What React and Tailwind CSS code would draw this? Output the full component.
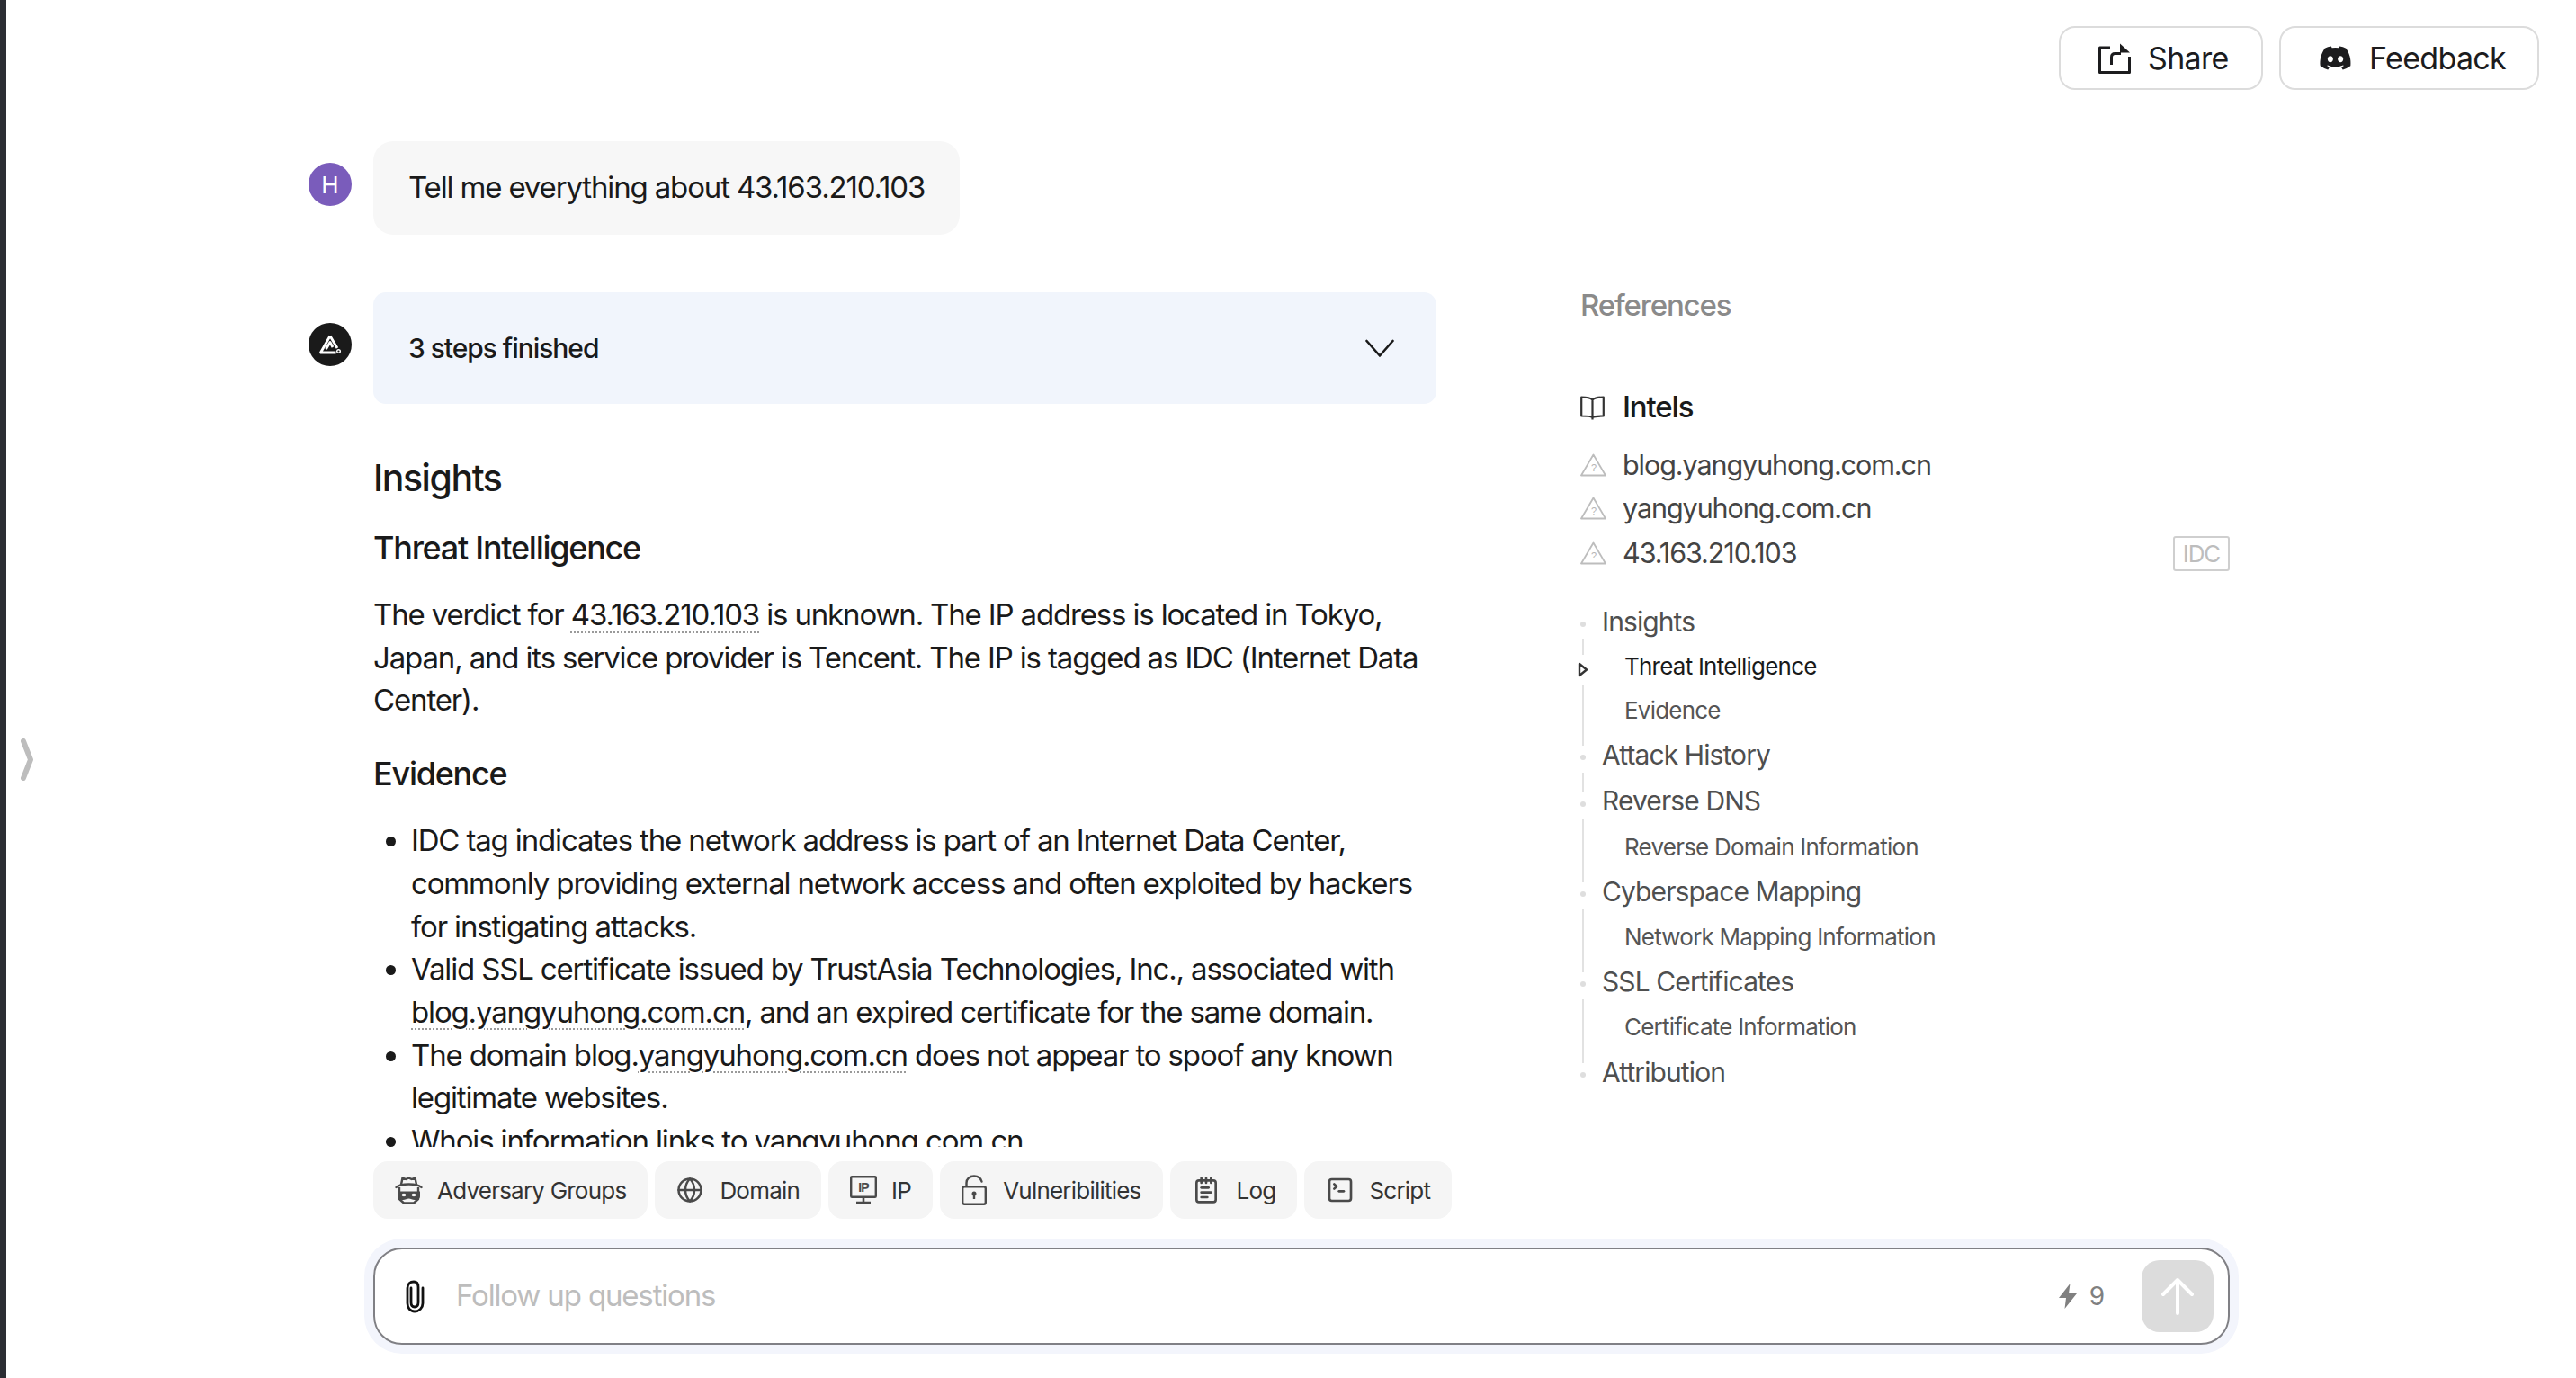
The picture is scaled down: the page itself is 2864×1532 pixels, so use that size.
import React from "react";
import { FaDiscord } from "react-icons/fa";
import { Globe, NotepadText, SquareTerminal } from "lucide-react";

const ShareIcon = () => (
  <svg width="36" height="34" viewBox="0 0 36 34" fill="none" className="shrink-0">
    <path d="M13 5H1.5V32.5H34.5V15" stroke="#1c1c1e" strokeWidth="3" strokeLinejoin="round" />
    <path d="M14.5 24V15.5C14.5 13 16 11.5 18.5 11.5H25" stroke="#1c1c1e" strokeWidth="3" />
    <path d="M24 0.5L35 10.5H24Z" fill="#1c1c1e" />
  </svg>
);

const SpyIcon = () => (
  <svg width="31" height="32" viewBox="0 0 31 32" fill="none" className="shrink-0">
    <path d="M7 10L8.5 2.5L12.5 4L15.5 2.5L18.5 4L22.5 2.5L24 10" stroke="#4a4a4a" strokeWidth="2.4" strokeLinejoin="round" />
    <path d="M1.5 13C4 10.5 9 9.5 15.5 9.5S27 10.5 29.5 13" stroke="#4a4a4a" strokeWidth="2.4" strokeLinecap="round" />
    <path d="M5 13V26L10 30.5H21L26 26V13" stroke="#4a4a4a" strokeWidth="2.4" strokeLinejoin="round" />
    <path d="M3 17.5H28V23C28 26 25 27 22 27C19.5 27 17.5 25.5 15.5 25.5S11.5 27 9 27C6 27 3 26 3 23Z" fill="#4a4a4a" />
    <ellipse cx="10" cy="21.5" rx="2.4" ry="1.7" fill="#f5f5f5" />
    <ellipse cx="21" cy="21.5" rx="2.4" ry="1.7" fill="#f5f5f5" />
  </svg>
);

const IpIcon = () => (
  <svg width="30" height="32" viewBox="0 0 30 32" fill="none" className="shrink-0">
    <rect x="1.2" y="1.2" width="27.6" height="22.6" stroke="#4a4a4a" strokeWidth="2.4" rx="1" />
    <path d="M15 24V29M7 30H23" stroke="#4a4a4a" strokeWidth="2.6" />
    <text x="15" y="17.5" textAnchor="middle" fontFamily="'Liberation Sans', sans-serif" fontSize="14" fontWeight="700" fill="#4a4a4a">IP</text>
  </svg>
);

const LockIcon = () => (
  <svg width="28" height="34" viewBox="0 0 28 34" fill="none" className="shrink-0">
    <rect x="1.2" y="13.2" width="25.6" height="19.6" rx="2" stroke="#4a4a4a" strokeWidth="2.4" />
    <path d="M5.5 12.5V9C5.5 4.5 9 1.5 14 1.5C18.5 1.5 21.5 4 22.5 7.5" stroke="#4a4a4a" strokeWidth="2.4" strokeLinecap="round" />
    <circle cx="14" cy="21" r="2.5" fill="#4a4a4a" />
    <path d="M14 22V27" stroke="#4a4a4a" strokeWidth="2.4" />
  </svg>
);

const BookIcon = () => (
  <svg width="27" height="27" viewBox="0 0 27 27" fill="none" className="mt-[1px] shrink-0">
    <path d="M13.5 4.5C11.5 2.5 8 1.5 1.2 1.5V22.5C8 22.5 11.5 22.5 13.5 24C15.5 22.5 19 22.5 25.8 22.5V1.5C19 1.5 15.5 2.5 13.5 4.5ZM13.5 4.5V26.5" stroke="#333" strokeWidth="2.2" strokeLinejoin="round" />
  </svg>
);

const Warn = () => (
  <svg width="29" height="26" viewBox="0 0 29 26" fill="none" className="shrink-0">
    <path d="M14.5 1.5L1 24.5H28Z" stroke="#bdbdbd" strokeWidth="1.8" strokeLinejoin="round" />
    <text x="14.5" y="20" textAnchor="middle" fontFamily="'Liberation Sans', sans-serif" fontSize="11" fill="#b5b5b5">?</text>
  </svg>
);

const Chip = ({ icon, label, gap }) => (
  <div className={`flex h-[64px] items-center rounded-[16px] bg-[#f5f5f5] pl-[24px] pr-[24px] text-[26px] tracking-[-0.03em] text-[#333] ${gap}`}>
    {icon}
    <span>{label}</span>
  </div>
);

const Dotted = ({ children }) => (
  <span className="underline decoration-[#9a9a9a] decoration-dotted decoration-2 underline-offset-[7px]">{children}</span>
);

const rail = [
  ["dot", "mt-[0px]", ""],
  ["line", "mt-[13px]", "h-[18px]"],
  ["arrow", "mt-[8px]", ""],
  ["line", "mt-[8px]", "h-[68px]"],
  ["dot", "mt-[10px]", ""],
  ["line", "mt-[14px]", "h-[22px]"],
  ["dot", "mt-[10px]", ""],
  ["line", "mt-[13px]", "h-[71px]"],
  ["dot", "mt-[10px]", ""],
  ["line", "mt-[14px]", "h-[70px]"],
  ["dot", "mt-[10px]", ""],
  ["line", "mt-[14px]", "h-[71px]"],
  ["dot", "mt-[10px]", ""],
];

const toc = [
  ["Insights", 1, "h-[50px]"],
  ["Threat Intelligence", 2, "h-[49px]", true],
  ["Evidence", 2, "h-[49px]"],
  ["Attack History", 1, "h-[51px]"],
  ["Reverse DNS", 1, "h-[51px]"],
  ["Reverse Domain Information", 2, "h-[50px]"],
  ["Cyberspace Mapping", 1, "h-[50px]"],
  ["Network Mapping Information", 2, "h-[50px]"],
  ["SSL Certificates", 1, "h-[50px]"],
  ["Certificate Information", 2, "h-[51px]"],
  ["Attribution", 1, "h-[50px]"],
];

export default function App() {
  return (
    <div className="flex h-[1532px] w-full overflow-hidden bg-white font-['Inter','Liberation_Sans',sans-serif] text-[#1a1a1a]">
      <div className="w-[7px] shrink-0 bg-[#2b2d33]" />

      <div className="flex w-[16px] shrink-0 items-start pl-[16px] pt-[821px]">
        <svg width="14" height="47" viewBox="0 0 14 47" fill="none" className="shrink-0">
          <path d="M3 3L11 23.5L3 44" stroke="#bdbdbd" strokeWidth="6" strokeLinecap="round" strokeLinejoin="round" />
        </svg>
      </div>

      <main className="flex min-w-0 flex-1 flex-col">
        <div className="flex justify-end gap-[18px] pr-[41px] pt-[29px]">
          <button className="flex h-[71px] w-[227px] items-center gap-[19px] rounded-[18px] border-2 border-[#dcdcdc] pl-[42px] text-[34px] tracking-[-0.02em] text-[#1c1c1e]">
            <ShareIcon />
            <span>Share</span>
          </button>
          <button className="flex h-[71px] w-[289px] items-center gap-[19px] rounded-[18px] border-2 border-[#dcdcdc] pl-[42px] text-[34px] tracking-[-0.02em] text-[#1c1c1e]">
            <FaDiscord size={37} color="#1c1c1e" className="shrink-0" />
            <span>Feedback</span>
          </button>
        </div>

        <div className="pl-[320px]">
          <div className="mt-[57px] flex gap-[24px]">
            <div className="mt-[24px] flex h-[48px] w-[48px] items-center justify-center rounded-full bg-[#7a5cbb] text-[26px] text-white">H</div>
            <div className="flex h-[104px] items-center rounded-[22px] bg-[#f7f7f7] px-[39px] text-[33px] tracking-[-0.035em]">
              Tell me everything about 43.163.210.103
            </div>
          </div>

          <div className="mt-[64px] flex">
            <div className="mt-[34px] flex h-[48px] w-[48px] shrink-0 items-center justify-center rounded-full bg-[#1a1a1a]">
              <svg width="26" height="24" viewBox="0 0 26 24" fill="none">
                <path d="M13 2.5L2.5 21H19.5M13 2.5L21 16M8.5 17L13 9.5L16 15" stroke="#fff" strokeWidth="2.8" strokeLinejoin="round" />
                <circle cx="22.5" cy="19.5" r="1.8" stroke="#fff" strokeWidth="1.4" />
              </svg>
            </div>

            <div className="ml-[24px] h-[950px] w-[1182px] shrink-0 overflow-hidden">
              <div className="flex h-[124px] items-center justify-between rounded-[14px] bg-[#f1f5fc] pl-[39px] pr-[47px] text-[30px] font-medium tracking-[-0.035em]">
                <span>3 steps finished</span>
                <svg width="32" height="22" viewBox="0 0 32 22" fill="none">
                  <path d="M1.5 3L16 19.5L30.5 3" stroke="#1a1a1a" strokeWidth="2.6" strokeLinecap="round" strokeLinejoin="round" />
                </svg>
              </div>
              <h1 className="mt-[54px] text-[41px] font-medium leading-[56px] tracking-[-0.035em]">Insights</h1>
              <h2 className="mt-[26px] text-[36px] font-medium leading-[48px] tracking-[-0.035em]">Threat Intelligence</h2>
              <p className="mt-[27px] text-[33px] leading-[47.7px] tracking-[-0.035em]">
                The verdict for <Dotted>43.163.210.103</Dotted> is unknown. The IP address is located in Tokyo, Japan, and its service provider is Tencent. The IP is tagged as IDC (Internet Data Center).
              </p>
              <h2 className="mt-[33px] text-[36px] font-medium leading-[48px] tracking-[-0.035em]">Evidence</h2>
              <ul className="mt-[27px] list-disc pl-[42px] text-[33px] leading-[47.7px] tracking-[-0.035em]">
                <li>IDC tag indicates the network address is part of an Internet Data Center, commonly providing external network access and often exploited by hackers for instigating attacks.</li>
                <li>Valid SSL certificate issued by TrustAsia Technologies, Inc., associated with <Dotted>blog.yangyuhong.com.cn</Dotted>, and an expired certificate for the same domain.</li>
                <li>The domain blog.<Dotted>yangyuhong.com.cn</Dotted> does not appear to spoof any known legitimate websites.</li>
                <li>Whois information links to yangyuhong.com.cn</li>
              </ul>
            </div>

            <aside className="ml-[160px] w-[722px] shrink-0">
              <div className="flex h-[30px] items-center text-[33px] font-medium tracking-[-0.035em] text-[#8a8a8a]">References</div>
              <div className="mt-[83px] flex h-[30px] items-center gap-[20px] text-[33px] font-medium tracking-[-0.035em] text-[#1a1a1a]">
                <BookIcon />
                <span>Intels</span>
              </div>
              <div className="mt-[33px] flex h-[32px] items-center gap-[18px] text-[30.5px] tracking-[-0.035em] text-[#444]">
                <Warn />
                <span>blog.yangyuhong.com.cn</span>
              </div>
              <div className="mt-[16px] flex h-[32px] items-center gap-[18px] text-[30.5px] tracking-[-0.035em] text-[#444]">
                <Warn />
                <span>yangyuhong.com.cn</span>
              </div>
              <div className="mt-[18px] flex h-[32px] items-center gap-[18px] text-[30.5px] tracking-[-0.035em] text-[#444]">
                <Warn />
                <span className="flex-1">43.163.210.103</span>
                <span className="flex h-[39px] w-[63px] items-center justify-center rounded-[3px] border-2 border-[#cfcfcf] text-[26px] text-[#bdbdbd]">IDC</span>
              </div>

              <div className="mt-[57px] flex">
                <div className="flex w-[6px] flex-col items-center pt-[3px]">
                  {rail.map(([type, mt, h], i) =>
                    type === "dot" ? (
                      <div key={i} className={`h-[6px] w-[6px] shrink-0 rounded-full bg-[#dedede] ${mt}`} />
                    ) : type === "line" ? (
                      <div key={i} className={`w-[2px] shrink-0 bg-[#e2e2e2] ${mt} ${h}`} />
                    ) : (
                      <svg key={i} width="12" height="17" viewBox="0 0 12 17" fill="none" className={`shrink-0 ${mt}`}>
                        <path d="M2 2L10 8.5L2 15Z" stroke="#333" strokeWidth="2.4" strokeLinejoin="round" />
                      </svg>
                    )
                  )}
                </div>
                <div className="ml-[18px] -mt-[22px] flex flex-col">
                  {toc.map(([label, level, h, active]) => (
                    <div
                      key={label}
                      className={`flex items-center tracking-[-0.03em] ${h} ${level === 1 ? "text-[30px] text-[#4f4f4f]" : "pl-[25px] text-[26px]"} ${level === 2 ? (active ? "text-[#1a1a1a]" : "text-[#555]") : ""}`}
                    >
                      {label}
                    </div>
                  ))}
                </div>
              </div>
            </aside>
          </div>

          <div className="mt-[16px] flex gap-[8px] pl-[72px]">
            <Chip icon={<SpyIcon />} label="Adversary Groups" gap="gap-[16px]" />
            <Chip icon={<Globe size={30} color="#4a4a4a" strokeWidth={2} className="shrink-0" />} label="Domain" gap="gap-[18px]" />
            <Chip icon={<IpIcon />} label="IP" gap="gap-[16px]" />
            <Chip icon={<LockIcon />} label="Vulneribilities" gap="gap-[18px]" />
            <Chip icon={<NotepadText size={32} color="#4a4a4a" strokeWidth={2} className="shrink-0" />} label="Log" gap="gap-[18px]" />
            <Chip icon={<SquareTerminal size={32} color="#4a4a4a" strokeWidth={2} className="shrink-0" />} label="Script" gap="gap-[16px]" />
          </div>

          <div className="ml-[72px] mt-[32px] flex h-[108px] w-[2064px] items-center rounded-[32px] border-2 border-[#808085] pl-[30px] pr-[16px] ring-[10px] ring-[#f3f5fc]">
            <svg width="28" height="37" viewBox="0 0 28 37" fill="none" className="shrink-0">
              <path d="M10 9V25C10 28 11.5 30 14 30C16.5 30 18 28 18 25V8C18 4 16 2 13 2C9 2 6 4.5 6 9V26C6 31 9 35 14 35C19 35 23 31 23 26V9" stroke="#111" strokeWidth="2.8" strokeLinecap="round" />
            </svg>
            <div className="ml-[32px] flex-1 text-[33px] tracking-[-0.035em] text-[#bdbdbd]">Follow up questions</div>
            <svg width="20" height="28" viewBox="0 0 20 28" fill="#808080" className="shrink-0">
              <path d="M12.5 0L0 16H8L6.5 28L20 11H11Z" />
            </svg>
            <span className="ml-[14px] text-[28px] text-[#808080]">9</span>
            <div className="ml-[41px] flex h-[80px] w-[80px] items-center justify-center rounded-[20px] bg-[#dcdcdc]">
              <svg width="36" height="42" viewBox="0 0 36 42" fill="none">
                <path d="M18 40V3M2 19L18 3L34 19" stroke="#fff" strokeWidth="4" strokeLinecap="round" strokeLinejoin="round" />
              </svg>
            </div>
          </div>
        </div>
      </main>
    </div>
  );
}
